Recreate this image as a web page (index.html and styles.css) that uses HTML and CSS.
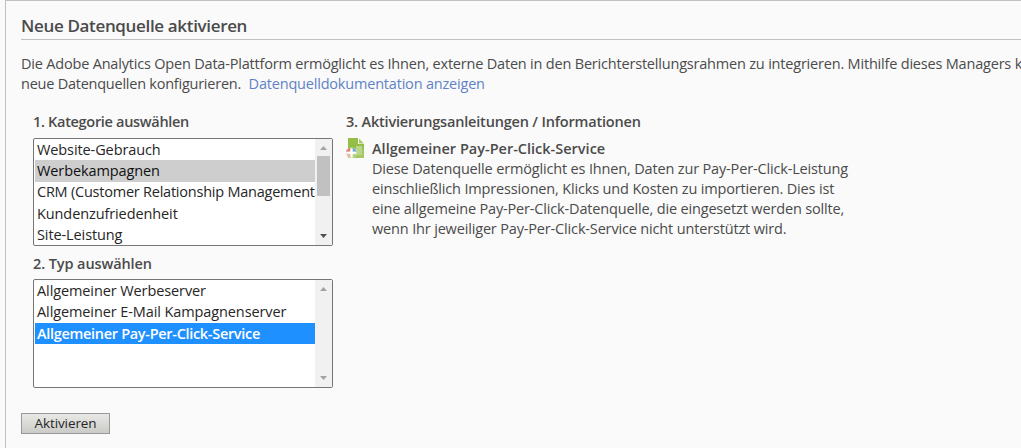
FILE: index.html
```html
<!DOCTYPE html>
<html lang="de">
<head>
<meta charset="utf-8">
<title>Neue Datenquelle aktivieren</title>
<link rel="stylesheet" href="styles.css">
</head>
<body>
<main class="panel">
  <h1 class="title">Neue Datenquelle aktivieren</h1>
  <p class="intro">Die Adobe Analytics Open Data-Plattform ermöglicht es Ihnen, externe Daten in den Berichterstellungsrahmen zu integrieren. Mithilfe dieses Managers k<br><span class="intro-end">neue Datenquellen konfigurieren.</span> <a class="doc-link">Datenquelldokumentation anzeigen</a></p>
  <div class="columns">
    <section class="choices">
      <h2 class="label label-category">1. Kategorie auswählen</h2>
      <div class="listbox listbox-category">
        <ul class="options">
          <li>Website-Gebrauch</li>
          <li class="inactive">Werbekampagnen</li>
          <li class="long">CRM (Customer Relationship Management</li>
          <li>Kundenzufriedenheit</li>
          <li>Site-Leistung</li>
        </ul>
        <div class="scrollbar">
          <svg class="arrow" width="7" height="4" viewBox="0 0 7 4"><path d="M0 4h7L3.5 0z" fill="#a3a3a3"/></svg>
          <div class="thumb"></div>
          <svg class="arrow arrow-down" width="7" height="4" viewBox="0 0 7 4"><path d="M0 0h7L3.5 4z" fill="#505050"/></svg>
        </div>
      </div>
      <h2 class="label label-type">2. Typ auswählen</h2>
      <div class="listbox listbox-type">
        <ul class="options">
          <li>Allgemeiner Werbeserver</li>
          <li>Allgemeiner E-Mail Kampagnenserver</li>
          <li class="selected">Allgemeiner Pay-Per-Click-Service</li>
        </ul>
        <div class="scrollbar">
          <svg class="arrow" width="7" height="4" viewBox="0 0 7 4"><path d="M0 4h7L3.5 0z" fill="#a3a3a3"/></svg>
          <svg class="arrow arrow-down" width="7" height="4" viewBox="0 0 7 4"><path d="M0 0h7L3.5 4z" fill="#a3a3a3"/></svg>
        </div>
      </div>
    </section>
    <section class="info">
      <h2 class="label">3. Aktivierungsanleitungen / Informationen</h2>
      <div class="service">
        <svg class="service-icon" width="19" height="20" viewBox="0 0 19 20">
          <path d="M2 0h10v6h6v14H2z" fill="#94be45"/>
          <path d="M2 11h16v9H2z" fill="#a5c960"/>
          <path d="M13 0.500l5 5h-5z" fill="#a9cc68"/>
          <path d="M10 8h6v9h-6z" fill="#b9d68a"/>
          <circle cx="5.500" cy="14.700" r="5.200" fill="#e6efdc"/>
          <path d="M0 13.700a5.500 5.500 0 0 1 4.500-4v4z" fill="#e08478"/>
          <path d="M6.500 9.700a5.500 5.500 0 0 1 4 4h-4z" fill="#6aa6e2"/>
          <path d="M0.500 15.700h4v4a5 5 0 0 1-4-4z" fill="#ecb49a"/>
          <path d="M6.500 15.700h4a5 5 0 0 1-4 4z" fill="#b4d480"/>
          <path d="M4.500 11h2v2.700h3v2h-3v3h-2v-3h-3v-2h3z" fill="#fff"/>
        </svg>
        <div class="service-text">
          <h3 class="service-title">Allgemeiner Pay-Per-Click-Service</h3>
          <p>Diese Datenquelle ermöglicht es Ihnen, Daten zur Pay-Per-Click-Leistung<br>einschließlich Impressionen, Klicks und Kosten zu importieren. Dies ist<br>eine allgemeine Pay-Per-Click-Datenquelle, die eingesetzt werden sollte,<br>wenn Ihr jeweiliger Pay-Per-Click-Service nicht unterstützt wird.</p>
        </div>
      </div>
    </section>
  </div>
  <button class="activate" type="button">Aktivieren</button>
</main>
</body>
</html>
```
FILE: styles.css
```css
* { box-sizing: border-box; margin: 0; padding: 0; }
body {
  background: #fafafa;
  color: #4b4b4b;
  font: 14.5px/20px "Open Sans", "Noto Sans", sans-serif;
  letter-spacing: -0.16px;
  overflow: hidden;
}
.panel {
  margin-left: 5px;
  height: 448px;
  padding-left: 15px;
  border: solid #c0c0c0;
  border-width: 1px 0 0 1px;
  overflow: hidden;
}
.title {
  height: 39px;
  padding-top: 13px;
  border-bottom: 1px solid #c0c0c0;
  font-size: 17px;
  line-height: 24px;
  font-weight: 600;
  letter-spacing: -0.34px;
}
.intro { padding-top: 14px; white-space: nowrap; letter-spacing: -0.195px; }
.intro-end { letter-spacing: -0.24px; }
.doc-link { margin-left: 4px; color: #5f82c6; }
.columns { display: flex; gap: 13px; padding: 18px 0 0 12px; }
.choices { width: 300px; }
.label { height: 20px; font-size: 14.5px; font-weight: 600; white-space: nowrap; letter-spacing: -0.18px; }
.label-category { letter-spacing: -0.31px; }
.label-type { margin-top: 8px; letter-spacing: -0.1px; }
.listbox {
  display: flex;
  border: 1px solid #767676;
  border-radius: 2px;
  background: #fff;
  color: #262626;
}
.listbox-category { height: 108px; margin-top: 6px; }
.listbox-type { height: 109px; margin-top: 5px; }
.options {
  flex: 1;
  min-width: 0;
  padding-left: 1px;
  list-style: none;
  overflow: hidden;
  letter-spacing: -0.1px;
}
.options li { height: 21.33px; padding-left: 2px; line-height: 21.33px; white-space: nowrap; }
.options .long { letter-spacing: -0.23px; line-height: 20px; }
.inactive { background: #cecece; color: #101010; }
.options .selected { background: #1e90ff; color: #fff; font-weight: 600; letter-spacing: -0.31px; }
.scrollbar {
  display: flex;
  flex-direction: column;
  align-items: center;
  width: 17px;
  padding: 7px 0;
  background: #f1f1f1;
}
.arrow { display: block; }
.thumb { width: 13px; height: 40px; margin-top: 6px; background: #c1c1c1; }
.arrow-down { margin-top: auto; }
.service { display: flex; gap: 7px; margin-top: 7px; }
.service-icon { margin-top: -1px; }
.service-text { white-space: nowrap; }
.service-title { font-size: 14.5px; font-weight: 600; letter-spacing: 0; }
.activate {
  display: block;
  width: 89px;
  height: 21px;
  margin-top: 25px;
  border: 1px solid #999;
  background: linear-gradient(#e8e8e6, #cbcbc7);
  color: #262626;
  font: 13.5px/19px "Open Sans", "Noto Sans", sans-serif;
  letter-spacing: -0.1px;
}
```
